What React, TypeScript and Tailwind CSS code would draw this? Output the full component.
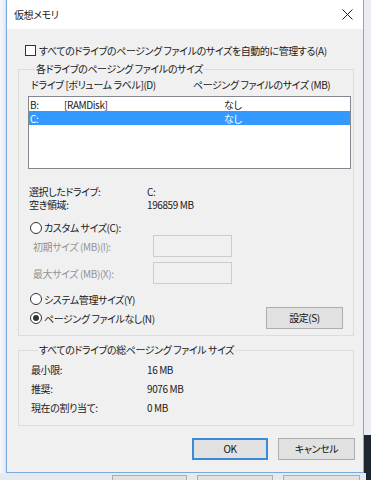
const FONT = "font-['Noto_Sans_CJK_JP',sans-serif] [font-feature-settings:'palt'] [font-variant-east-asian:proportional-width] tracking-[-0.4px]";

type Drive = { letter: string; label: string; size: string };

const DRIVES: Drive[] = [
  { letter: "B:", label: "[RAMDisk]", size: "なし" },
  { letter: "C:", label: "", size: "なし" },
];

function Radio({ checked }: { checked?: boolean }) {
  return (
    <span className="flex h-[12px] w-[12px] shrink-0 items-center justify-center rounded-full border border-[#333] bg-white">
      {checked ? <span className="h-[6px] w-[6px] rounded-full bg-[#333]" /> : null}
    </span>
  );
}

function WinButton({ children, primary }: { children: React.ReactNode; primary?: boolean }) {
  return (
    <button
      type="button"
      className={
        primary
          ? "flex h-[22px] w-[76px] items-center justify-center border-2 border-[#3c8ad8] bg-[#e1e1e1] text-[10px] leading-none text-[#111]"
          : "flex h-[22px] w-[77px] items-center justify-center border border-[#adadad] bg-[#e1e1e1] text-[10px] leading-none text-[#111]"
      }
    >
      {children}
    </button>
  );
}

/** 仮想メモリ ダイアログ（註解：Windows 10 の詳細設定から開くもの）。 */
export default function App() {
  return (
    <div className={`flex h-[480px] w-[371px] flex-col overflow-hidden bg-[#eef1f4] text-[#1a1a1a] ${FONT}`}>
      <div className="flex h-[473px]">
        <div className="w-[6px] bg-[#f3f5f8]" />
        <div className="flex w-[358px] flex-col border border-t-0 border-[#7aa9dc] bg-[#f0f0f0] shadow-[0_0_4px_rgba(80,140,210,0.4)]">
          {/* タイトルバー */}
          <div className="flex h-[29px] items-center justify-between bg-white pl-[7px] pr-[9px]">
            <span className="text-[10px] leading-none">仮想メモリ</span>
            <svg width="11" height="11" viewBox="0 0 11 11" className="mr-[1px]">
              <path d="M0.5 0.5 L10.5 10.5 M10.5 0.5 L0.5 10.5" stroke="#222" strokeWidth="1" fill="none" />
            </svg>
          </div>

          <div className="flex flex-col pl-[11px] text-[10px] leading-[13px]">
            {/* 自動管理 */}
            <div className="mt-[13px] flex h-[16px] items-center gap-[3px] pl-[7px] whitespace-nowrap">
              <span className="h-[11px] w-[11px] shrink-0 border border-[#333] bg-white" />
              <span>すべてのドライブのページング ファイルのサイズを自動的に管理する(A)</span>
            </div>

            <fieldset className="mt-[3px] w-[336px] border border-[#dcdcdc] pb-[6px] pl-[9px] pr-[2px]">
              <legend className="ml-[7px] px-[1px] leading-[16px] whitespace-nowrap">各ドライブのページング ファイルのサイズ</legend>
              <div className="flex h-[14px] items-center pl-[3px] whitespace-nowrap">
                <span className="w-[162px] shrink-0">ドライブ [ボリューム ラベル](D)</span>
                <span>ページング ファイルのサイズ (MB)</span>
              </div>
              <div className="mt-[5px] h-[73px] w-[323px] border border-[#828790] bg-white">
                {DRIVES.map((d, i) => (
                  <div
                    key={d.letter}
                    className={
                      i === 1
                        ? "flex h-[14px] items-center bg-[#3399ff] pl-[1px] text-white"
                        : "flex h-[14px] items-center pl-[1px]"
                    }
                  >
                    <span className="w-[34px]">{d.letter}</span>
                    <span className="w-[160px]">{d.label}</span>
                    <span>{d.size}</span>
                  </div>
                ))}
              </div>

              <div className="mt-[16px] flex h-[13px] items-center pl-[1px]">
                <span className="w-[118px]">選択したドライブ:</span>
                <span>C:</span>
              </div>
              <div className="flex h-[13px] items-center pl-[1px]">
                <span className="w-[118px]">空き領域:</span>
                <span>196859 MB</span>
              </div>

              <div className="mt-[9px] flex h-[15px] items-center gap-[2px] pl-[2px]">
                <Radio />
                <span>カスタム サイズ(C):</span>
              </div>
              <div className="flex h-[22px] items-center">
                <span className="w-[125px] pl-[5px] text-[#939393]">初期サイズ (MB)(I):</span>
                <span className="h-[22px] w-[79px] border border-[#cccccc] bg-[#f0f0f0]" />
              </div>
              <div className="mt-[5px] flex h-[22px] items-center">
                <span className="w-[125px] pl-[5px] text-[#939393]">最大サイズ (MB)(X):</span>
                <span className="h-[22px] w-[79px] border border-[#cccccc] bg-[#f0f0f0]" />
              </div>

              <div className="mt-[7px] flex h-[16px] items-center gap-[2px] pl-[2px]">
                <Radio />
                <span>システム管理サイズ(Y)</span>
              </div>
              <div className="flex h-[22px] items-center gap-[2px] pl-[2px]">
                <Radio checked />
                <span>ページング ファイルなし(N)</span>
                <span className="ml-auto mr-[8px]">
                  <WinButton>設定(S)</WinButton>
                </span>
              </div>
            </fieldset>

            <fieldset className="mt-[6px] w-[336px] border border-[#dcdcdc] pb-[8px] pl-[12px]">
              <legend className="ml-[7px] px-[1px] leading-[16px] whitespace-nowrap">すべてのドライブの総ページング ファイル サイズ</legend>
              {[
                ["最小限:", "16 MB"],
                ["推奨:", "9076 MB"],
                ["現在の割り当て:", "0 MB"],
              ].map(([k, v], i) => (
                <div key={k} className={i === 0 ? "mt-[2px] flex h-[19px] items-center" : "flex h-[19px] items-center"}>
                  <span className="w-[116px]">{k}</span>
                  <span>{v}</span>
                </div>
              ))}
            </fieldset>

            <div className="mt-[12px] flex justify-end gap-[10px] pr-[8px]">
              <WinButton primary>OK</WinButton>
              <WinButton>キャンセル</WinButton>
            </div>
          </div>
        </div>
        <div className="flex w-[7px] flex-col">
          <div className="h-[435px] bg-[#e9ecf0]" />
          <div className="flex-1 bg-[#1f2630]" />
        </div>
      </div>
      <div className="flex h-[7px] items-end bg-[#e6e9ed]">
        <div className="ml-[112px] h-[5px] w-[75px] border border-b-0 border-[#adadad] bg-[#e1e1e1]" />
        <div className="ml-[10px] h-[5px] w-[76px] border border-b-0 border-[#adadad] bg-[#e1e1e1]" />
        <div className="ml-[10px] h-[5px] w-[77px] border border-b-0 border-[#adadad] bg-[#e1e1e1]" />
        <div className="ml-auto h-[7px] w-[5px] bg-[#1f2630]" />
      </div>
    </div>
  );
}
